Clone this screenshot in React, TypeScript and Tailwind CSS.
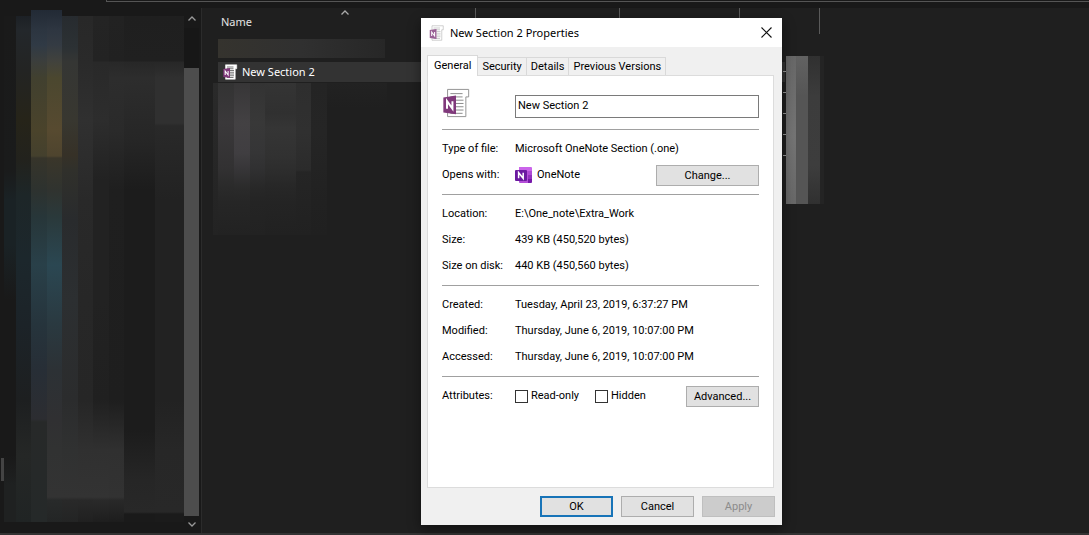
import { useState, type ReactNode } from 'react';

type Stop = [number, string];
type Band = { x: number; w: number; stops: Stop[] };

const SIDEBAR: Band[] = [
  { x: 4, w: 12, stops: [[16, '#1a1a1a'], [170, '#1a1b1b'], [200, '#1a2225'], [245, '#1a2225'], [300, '#191919'], [455, '#191919'], [485, '#1f2121'], [522, '#1f2121']] },
  { x: 16, w: 15, stops: [[16, '#1c2025'], [30, '#23272b'], [70, '#232423'], [120, '#262419'], [160, '#22221d'], [195, '#1d2628'], [260, '#1c272c'], [325, '#1c2328'], [400, '#1d1f20'], [455, '#252726'], [522, '#202424']] },
  { x: 31, w: 16, stops: [[10, '#222a35'], [30, '#2c3540'], [45, '#303a45'], [61, '#3b3e3c'], [78, '#41402f'], [130, '#4a432b'], [156, '#44402d'], [158, '#36342a'], [190, '#2d322f'], [217, '#273639'], [265, '#294049'], [325, '#26343c'], [370, '#272e36'], [419, '#2c2d31'], [422, '#272929'], [522, '#252929']] },
  { x: 47, w: 15, stops: [[10, '#222a35'], [30, '#2e3641'], [45, '#343b43'], [61, '#41423d'], [78, '#4b472f'], [130, '#574a30'], [156, '#4e442e'], [158, '#3a362a'], [190, '#30332f'], [217, '#2a393b'], [265, '#2b4752'], [325, '#2a3940'], [370, '#2c3135'], [419, '#303032'], [450, '#313232'], [497, '#333333'], [500, '#282a2a'], [522, '#232525']] },
  { x: 62, w: 16, stops: [[16, '#272b2f'], [48, '#2c3134'], [62, '#353634'], [120, '#383730'], [155, '#363127'], [170, '#30302b'], [220, '#292b2d'], [300, '#2c2f31'], [400, '#2b2c2d'], [450, '#303131'], [497, '#333333'], [500, '#292929'], [522, '#232424']] },
  { x: 78, w: 15, stops: [[16, '#282828'], [62, '#2a2a2a'], [120, '#303030'], [200, '#292929'], [300, '#272727'], [400, '#262626'], [450, '#303030'], [497, '#333333'], [500, '#292929'], [522, '#202020']] },
  { x: 93, w: 16, stops: [[16, '#242424'], [61, '#232323'], [62, '#292929'], [120, '#2d2d2d'], [180, '#222222'], [300, '#222222'], [400, '#202020'], [450, '#303030'], [497, '#333333'], [500, '#2a2a2a'], [522, '#1e1e1e']] },
  { x: 109, w: 15, stops: [[16, '#222222'], [61, '#212121'], [62, '#282828'], [78, '#2d2d2d'], [130, '#2a2a2a'], [190, '#1f1f1f'], [400, '#1e1e1e'], [450, '#303030'], [497, '#323232'], [500, '#292929'], [522, '#1d1d1d']] },
  { x: 124, w: 31, stops: [[16, '#1f1f1f'], [61, '#202020'], [62, '#272727'], [78, '#2d2d2d'], [140, '#262626'], [190, '#1c1c1c'], [430, '#1c1c1c'], [480, '#262626'], [512, '#282828'], [514, '#1a1a1a'], [522, '#1a1a1a']] },
  { x: 155, w: 29, stops: [[16, '#1f1f1f'], [61, '#202020'], [62, '#272727'], [78, '#303030'], [123, '#303030'], [126, '#292929'], [200, '#222222'], [400, '#222222'], [450, '#272727'], [512, '#282828'], [514, '#1b1b1b'], [522, '#1b1b1b']] },
];

const LIST: Band[] = [
  { x: 0, w: 5, stops: [[0, '#2a2a2a'], [70, '#272727'], [152, '#232323']] },
  { x: 5, w: 16, stops: [[0, '#333333'], [40, '#3a383a'], [85, '#323132'], [102, '#2b2b2b'], [119, '#262626'], [152, '#222222']] },
  { x: 21, w: 16, stops: [[0, '#373637'], [40, '#434143'], [70, '#403e41'], [87, '#363537'], [104, '#2b2b2b'], [119, '#262626'], [152, '#222222']] },
  { x: 37, w: 15, stops: [[0, '#333333'], [40, '#383838'], [70, '#353536'], [87, '#303031'], [104, '#282828'], [119, '#242424'], [152, '#222222']] },
  { x: 52, w: 31, stops: [[0, '#343434'], [30, '#303030'], [45, '#353535'], [73, '#313131'], [87, '#2d2d2d'], [104, '#272727'], [119, '#242424'], [152, '#212121']] },
  { x: 83, w: 15, stops: [[0, '#2e2e2e'], [50, '#303030'], [87, '#2b2b2b'], [89, '#252525'], [119, '#232323'], [152, '#212121']] },
  { x: 98, w: 16, stops: [[0, '#242424'], [50, '#252525'], [119, '#212121'], [152, '#202020']] },
  { x: 114, w: 60, stops: [[0, '#222222'], [25, '#1f1f1f'], [152, '#1f1f1f']] },
];

const SIZES: Band[] = [
  { x: 0, w: 10, stops: [[0, '#686868'], [80, '#747474'], [148, '#686868']] },
  { x: 10, w: 12, stops: [[0, '#626262'], [40, '#555555'], [148, '#555555']] },
  { x: 22, w: 12, stops: [[0, '#303030'], [40, '#3c3c3c'], [110, '#3d3d3d'], [148, '#303030']] },
  { x: 34, w: 4, stops: [[0, '#242424'], [148, '#242424']] },
];

function Mosaic({ id, bands, width, top, bottom, className }: { id: string; bands: Band[]; width: number; top: number; bottom: number; className: string }) {
  const span = bottom - top;
  return (
    <svg aria-hidden="true" className={className} viewBox={`0 ${top} ${width} ${span}`} preserveAspectRatio="none" shapeRendering="crispEdges">
      <defs>
        {bands.map((b) => (
          <linearGradient key={b.x} id={`${id}${b.x}`} gradientUnits="userSpaceOnUse" x1="0" x2="0" y1={top} y2={bottom}>
            {b.stops.map(([y, c]) => (
              <stop key={y} offset={(y - top) / span} stopColor={c} />
            ))}
          </linearGradient>
        ))}
      </defs>
      {bands.map((b) => (
        <rect key={b.x} x={b.x} y={b.stops[0][0]} width={b.w} height={b.stops[b.stops.length - 1][0] - b.stops[0][0]} fill={`url(#${id}${b.x})`} />
      ))}
    </svg>
  );
}

function SectionIcon({ className, dark = false }: { className: string; dark?: boolean }) {
  return (
    <svg aria-hidden="true" className={className} viewBox="0 0 28 32">
      <path d="M5 1.5H27.5V9.5H24.5V30.5H5Z" fill="#fff" stroke={dark ? '#fff' : '#8f8f8f'} />
      <path d="M8 6H21M8 9.5H21M14 13H22M14 16.5H22M14 20H22M14 23.5H22M8 27H21" stroke={dark ? '#555' : '#858585'} strokeWidth={dark ? 1.6 : 1} />
      <path d="M0.5 10L14 8V28L0.5 26Z" fill="#80397b" />
      <path d="M4.4 22V14L10.2 22V14" fill="none" stroke="#fff" strokeWidth="2.1" />
    </svg>
  );
}

function OneNoteIcon() {
  return (
    <svg aria-hidden="true" className="h-4 w-[17px] shrink-0" viewBox="0 0 17 16">
      <path d="M4 0H16Q17 0 17 1V4H4Z" fill="#ca64ea" />
      <path d="M4 4H13V16H5Q4 16 4 15Z" fill="#b54fd8" />
      <path d="M13 4H17V8H13Z" fill="#ae4bd5" />
      <path d="M13 8H17V12H13Z" fill="#9332bf" />
      <path d="M13 12H17V15Q17 16 16 16H13Z" fill="#7719aa" />
      <rect y="3" width="12" height="11" rx="1" fill="#6b1aa0" />
      <path d="M3.6 11.3V5.7L8.2 11.3V5.7" fill="none" stroke="#fff" strokeWidth="1.5" />
    </svg>
  );
}

function Chevron({ down = false, className }: { down?: boolean; className: string }) {
  return (
    <svg aria-hidden="true" className={className} viewBox="0 0 8 5">
      <path d={down ? 'M0.5 0.5L4 4L7.5 0.5' : 'M0.5 4.5L4 1L7.5 4.5'} fill="none" stroke="currentColor" strokeWidth="1.3" />
    </svg>
  );
}

function Row({ label, children }: { label: string; children: ReactNode }) {
  return (
    <div className="flex h-[26px] items-center">
      <dt className="w-[73px] shrink-0">{label}</dt>
      <dd className="flex min-w-0 flex-1 items-center">{children}</dd>
    </div>
  );
}

function Section({ children }: { children: ReactNode }) {
  return <dl className="border-t border-[#a0a0a0] py-1.5">{children}</dl>;
}

const BUTTON = 'h-[21px] border border-[#adadad] bg-[#e1e1e1] pt-px text-center';
const TABS = ['General', 'Security', 'Details', 'Previous Versions'];
const HEADER = 'border-r border-[#5a5a5a] pt-px pl-2 text-left';

export default function App() {
  const [name, setName] = useState('New Section 2');
  return (
    <div className="relative flex min-h-screen flex-col overflow-hidden bg-[#1f1f1f] font-['Noto_Sans',sans-serif] text-[11px] text-[#e4e4e4]">
      <div className="flex h-2 bg-[#191919]">
        <div className="w-[106px]" />
        <div className="h-0.5 flex-1 border-b border-l border-[#555]" />
      </div>
      <div className="flex flex-1">
        <nav aria-label="Folders" className="flex w-[202px] shrink-0 border-r border-[#2b2b2b] bg-[#191919]">
          <div className="relative flex-1">
            <Mosaic id="side" bands={SIDEBAR} width={184} top={8} bottom={533} className="absolute inset-0 h-full w-full" />
            <div className="absolute bottom-[52px] left-px h-[23px] w-[3px] bg-[#444]" />
          </div>
          <div className="mr-0.5 flex w-[15px] flex-col items-center">
            <button aria-label="Scroll up" className="flex h-5 w-full items-center justify-center text-[#999]">
              <Chevron className="h-[5px] w-2" />
            </button>
            <div className="h-10 w-full bg-[#171717]" />
            <div className="w-full flex-1 bg-[#4d4d4d]" />
            <button aria-label="Scroll down" className="flex h-[17px] w-full items-center justify-center text-[#999]">
              <Chevron down className="h-[5px] w-2" />
            </button>
          </div>
        </nav>
        <main className="relative min-w-0 flex-1">
          <div className="flex h-[26px] leading-[26px]">
            <div className="relative w-[274px] border-r border-[#5a5a5a] pt-px pl-[19px]">
              Name
              <Chevron className="absolute top-0.5 left-[139px] h-[5px] w-2 text-[#aaa]" />
            </div>
            <div className={`w-36 ${HEADER}`}>Date modified</div>
            <div className={`w-[120px] ${HEADER}`}>Type</div>
            <div className={`w-20 ${HEADER}`}>Size</div>
          </div>
          <div className="mt-[5px] ml-4 h-[19px] w-[167px] bg-linear-to-r from-[#35332e] via-[#303030] to-[#272727]" />
          <div className="mt-1 ml-4 flex h-5 max-w-[567px] items-center gap-1 bg-[#333] pl-1">
            <SectionIcon dark className="h-4 w-4" />
            <span className="text-white">New Section 2</span>
          </div>
          <Mosaic id="list" bands={LIST} width={174} top={0} bottom={152} className="mt-px ml-[11px] h-[152px] w-[174px]" />
          <div className="absolute top-12 left-[581px] flex">
            <div className="flex w-[3px] flex-col gap-5 pt-[15px]">
              {[0, 1, 2, 3, 4].map((i) => (
                <span key={i} className="h-px w-[3px] bg-[#999]" />
              ))}
            </div>
            <Mosaic id="size" bands={SIZES} width={38} top={0} bottom={148} className="h-[148px] w-[38px]" />
          </div>
        </main>
      </div>
      <div className="h-0.5 bg-[#333]" />

      <div role="dialog" aria-labelledby="dialog-title" className="absolute top-[18px] left-[421px] flex w-[361px] flex-col bg-[#f0f0f0] font-[Roboto,sans-serif] text-[11px] leading-4 text-black shadow-[0_4px_12px_rgba(0,0,0,0.45)]">
        <header className="flex h-[29px] items-center gap-1.5 bg-white px-2">
          <SectionIcon className="h-4 w-[15px] opacity-80" />
          <h1 id="dialog-title" className="flex-1 font-['Noto_Sans',sans-serif]">New Section 2 Properties</h1>
          <button aria-label="Close" className="flex h-5 w-[15px] items-center justify-center">
            <svg aria-hidden="true" className="h-[11px] w-[11px]" viewBox="0 0 11 11">
              <path d="M0.5 0.5L10.5 10.5M10.5 0.5L0.5 10.5" stroke="#111" strokeWidth="1.1" />
            </svg>
          </button>
        </header>
        <div role="tablist" className="flex items-end pt-2 pl-1.5">
          {TABS.map((t, i) => (
            <button
              key={t}
              role="tab"
              aria-selected={i === 0}
              className={
                i === 0
                  ? 'z-10 -mb-px h-[21px] border border-b-0 border-[#d9d9d9] bg-white px-1.5'
                  : 'h-[18px] border border-b-0 border-l-0 border-[#d9d9d9] px-1'
              }
            >
              {t}
            </button>
          ))}
        </div>
        <div role="tabpanel" className="mr-2 ml-1.5 flex flex-col border border-[#dcdcdc] bg-white px-3.5 pb-[72px]">
          <div className="flex h-[53px] items-end pb-[11px]">
            <div className="w-[73px] shrink-0">
              <SectionIcon className="h-[30px] w-7" />
            </div>
            <input
              aria-label="File name"
              value={name}
              onChange={(e) => setName(e.target.value)}
              className="h-[23px] min-w-0 flex-1 border border-[#7a7a7a] bg-white px-0.5 pb-[3px] outline-none"
            />
          </div>
          <Section>
            <Row label="Type of file:">Microsoft OneNote Section (.one)</Row>
            <Row label="Opens with:">
              <OneNoteIcon />
              <span className="ml-[5px] flex-1">OneNote</span>
              <button className={`w-[103px] ${BUTTON}`}>Change...</button>
            </Row>
          </Section>
          <Section>
            <Row label="Location:">E:\One_note\Extra_Work</Row>
            <Row label="Size:">439 KB (450,520 bytes)</Row>
            <Row label="Size on disk:">440 KB (450,560 bytes)</Row>
          </Section>
          <Section>
            <Row label="Created:">Tuesday, April 23, 2019, 6:37:27 PM</Row>
            <Row label="Modified:">Thursday, June 6, 2019, 10:07:00 PM</Row>
            <Row label="Accessed:">Thursday, June 6, 2019, 10:07:00 PM</Row>
          </Section>
          <Section>
            <Row label="Attributes:">
              <label className="flex w-20 items-center gap-[3px]">
                <input type="checkbox" className="h-[13px] w-[13px] shrink-0 appearance-none border border-[#333] bg-white checked:bg-[#333]" />
                Read-only
              </label>
              <label className="flex flex-1 items-center gap-[3px]">
                <input type="checkbox" className="h-[13px] w-[13px] shrink-0 appearance-none border border-[#333] bg-white checked:bg-[#333]" />
                Hidden
              </label>
              <button className={`w-[73px] ${BUTTON}`}>Advanced...</button>
            </Row>
          </Section>
        </div>
        <footer className="flex justify-end gap-2 pt-2 pr-[7px] pb-2">
          <button className="h-[21px] w-[73px] border-2 border-[#1874b8] bg-[#e1e1e1] pt-px leading-4">OK</button>
          <button className={`w-[73px] ${BUTTON}`}>Cancel</button>
          <button disabled className="h-[21px] w-[73px] border border-[#bfbfbf] bg-[#cccccc] pt-px text-[#8b8b8b]">Apply</button>
        </footer>
      </div>
    </div>
  );
}
